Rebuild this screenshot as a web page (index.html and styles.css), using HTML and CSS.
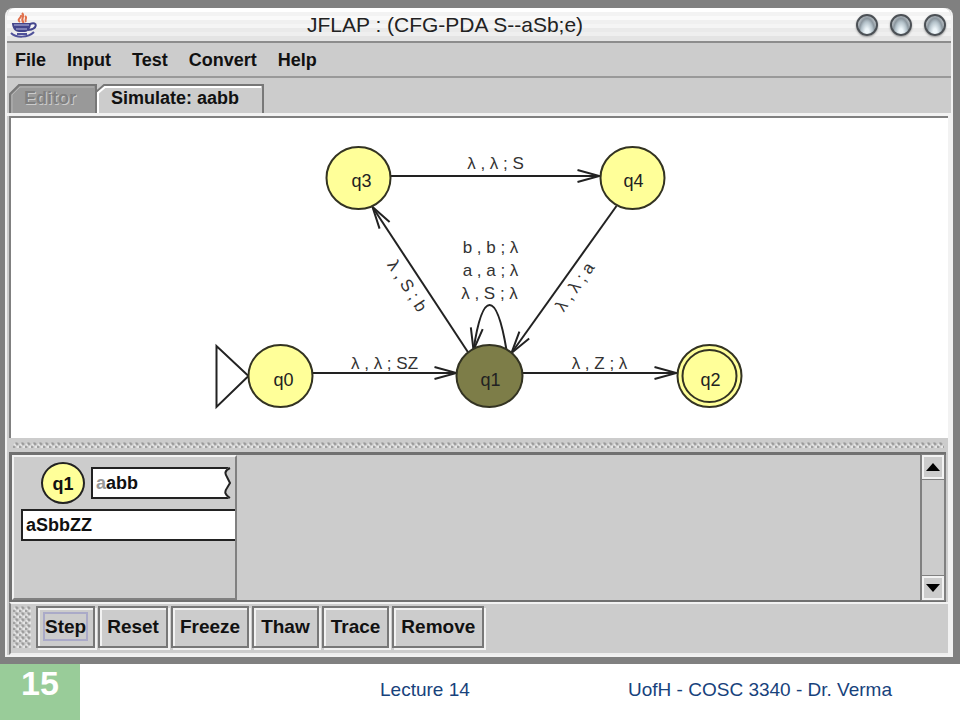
FILE: index.html
```html
<!DOCTYPE html>
<html lang="en">
<head>
<meta charset="utf-8">
<title>JFLAP : (CFG-PDA S--aSb;e)</title>
<link rel="stylesheet" href="styles.css">
</head>
<body>
<main class="desktop">
  <section class="window">
    <header class="titlebar">
      <svg class="java" viewBox="0 0 28 26" aria-hidden="true">
        <path d="M14 11 C9 7 16 5 12 1 M10 10 C6 7 12 6 11 3 M16 10 C14 7 18 6 15 4" fill="none" stroke="#e0704c" stroke-width="2"/>
        <path d="M2 11 H21 C21 16 18 20 15 20 H9 C5 20 2 16 2 11Z" fill="#43458c"/>
        <path d="M4 13 H19 M6 17 H17" stroke="#b9bce0" stroke-width="1"/>
        <path d="M20 12 C28 9 28 17 18 18" fill="none" stroke="#43458c" stroke-width="2"/>
        <path d="M1 21 C6 26 18 26 24 20 M7 22 H17" fill="none" stroke="#50529a" stroke-width="2"/>
      </svg>
      <h1 class="title">JFLAP : (CFG-PDA S--aSb;e)</h1>
      <div class="controls">
        <button class="orb" aria-label="Minimize"></button>
        <button class="orb" aria-label="Maximize"></button>
        <button class="orb" aria-label="Close"></button>
      </div>
    </header>
    <nav class="menubar">
      <button class="menu">File</button>
      <button class="menu">Input</button>
      <button class="menu">Test</button>
      <button class="menu">Convert</button>
      <button class="menu">Help</button>
    </nav>
    <div class="tabs" role="tablist">
      <button class="tab tab-editor" role="tab" disabled>
        <svg class="tab-shape" viewBox="0 0 88 29" preserveAspectRatio="none" aria-hidden="true"><path d="M1 29 V10 L10 1 H87 V29" fill="#999" stroke="#777" stroke-width="2"/><path d="M3 29 V11 L11 3 H85" fill="none" stroke="#b5b5b5"/></svg>
        <span class="tab-label">Editor</span>
      </button>
      <button class="tab tab-simulate" role="tab" aria-selected="true">
        <svg class="tab-shape" viewBox="0 0 168 29" preserveAspectRatio="none" aria-hidden="true"><path d="M0 29 V8 L8 1 H167 V29" fill="#ccc" stroke="#777" stroke-width="2"/><path d="M2 29 V9 L9 3 H165" fill="none" stroke="#fff" stroke-width="2"/></svg>
        <span class="tab-label">Simulate: aabb</span>
      </button>
    </div>
    <div class="pane">
      <svg class="automaton" viewBox="0 1 936 320" role="img" aria-label="Pushdown automaton">
        <defs>
          <marker id="arrow" markerUnits="userSpaceOnUse" markerWidth="26" markerHeight="16" refX="23" refY="8" orient="auto"><path d="M1 2 L23 8 L1 14" class="line"/></marker>
        </defs>
        <g class="line">
          <path d="M205 229 V290 L237 259 Z"/>
          <path d="M301 256 H445" marker-end="url(#arrow)"/>
          <path d="M510 256 H665" marker-end="url(#arrow)"/>
          <path d="M379 59 H588" marker-end="url(#arrow)"/>
          <path d="M457 236 L361 90" marker-end="url(#arrow)"/>
          <path d="M605 89 L500 236" marker-end="url(#arrow)"/>
          <path d="M495 233 C485 173 471 173 462 233" marker-end="url(#arrow)"/>
        </g>
        <g class="states">
          <ellipse cx="269" cy="259" rx="32" ry="31"/>
          <ellipse cx="347" cy="61" rx="32" ry="31"/>
          <ellipse cx="621" cy="61" rx="32" ry="31"/>
          <ellipse class="current" cx="478" cy="259" rx="33" ry="31"/>
          <ellipse cx="698" cy="259" rx="32" ry="31"/>
          <ellipse cx="698" cy="259" rx="27" ry="26"/>
        </g>
        <g class="state-name">
          <text x="272" y="269">q0</text>
          <text x="350" y="70">q3</text>
          <text x="622" y="70">q4</text>
          <text x="479" y="269">q1</text>
          <text x="699" y="269">q2</text>
        </g>
        <g class="transition">
          <text x="484" y="52">λ , λ ; S</text>
          <text x="373" y="252">λ , λ ; SZ</text>
          <text x="588" y="252">λ , Z ; λ</text>
          <text x="479" y="136">b , b ; λ</text>
          <text x="479" y="159">a , a ; λ</text>
          <text x="478" y="182">λ , S ; λ</text>
          <text transform="translate(391 172) rotate(57)">λ , S ; b</text>
          <text transform="translate(568 173) rotate(-55)">λ , λ ; a</text>
        </g>
      </svg>
      <div class="divider grip"></div>
      <div class="simulation">
        <article class="configuration">
          <div class="config-row">
            <span class="badge">q1</span>
            <div class="tape"><span class="read">a</span>abb
              <svg class="tear" viewBox="0 0 8 32" aria-hidden="true"><path d="M8 0 H6 C0 4 1 6 4 10 C8 13 7 17 4 20 C0 25 2 27 6 32 H8Z" fill="#ccc"/><path d="M7 1 C1 4 2 7 4 10 L7 16 L4 21 C1 25 2 28 7 31" fill="none" stroke="#222" stroke-width="2"/></svg>
            </div>
          </div>
          <div class="stack">aSbbZZ</div>
        </article>
        <div class="scrollbar">
          <button class="scroll-button" aria-label="Scroll up"><svg viewBox="0 0 14 8" aria-hidden="true"><path d="M0 8 L7 0 L14 8Z"/></svg></button>
          <button class="scroll-button" aria-label="Scroll down"><svg viewBox="0 0 14 8" aria-hidden="true"><path d="M0 0 L7 8 L14 0Z"/></svg></button>
        </div>
      </div>
      <div class="toolbar">
        <div class="handle grip"></div>
        <button class="tool"><span class="focus">Step</span></button>
        <button class="tool">Reset</button>
        <button class="tool">Freeze</button>
        <button class="tool">Thaw</button>
        <button class="tool">Trace</button>
        <button class="tool">Remove</button>
      </div>
    </div>
  </section>
</main>
<footer class="footer">
  <strong class="page-number">15</strong>
  <span class="lecture">Lecture 14</span>
  <span class="author">UofH - COSC 3340 - Dr. Verma</span>
</footer>
</body>
</html>
```
FILE: styles.css
```css
* { box-sizing: border-box; }

body {
  margin: 0;
  min-height: 100vh;
  display: flex;
  flex-direction: column;
  background: #fff;
  font-family: "Liberation Sans", Arial, sans-serif;
}

button {
  font: inherit;
  color: inherit;
  border: 0;
  padding: 0;
  background: none;
}

.desktop {
  flex: 1;
  display: flex;
  padding: 8px 7px 7px 5px;
  background: #808080;
}

.window {
  flex: 1;
  display: flex;
  flex-direction: column;
  background: #ccc;
  border: solid #f2f2f2;
  border-width: 0 2px 2px;
  border-radius: 8px 8px 0 0;
  font-size: 18px;
  font-weight: bold;
  color: #111;
}

.titlebar {
  display: grid;
  grid-template-columns: 28px 1fr 96px;
  align-items: center;
  height: 35px;
  padding: 0 3px;
  border-bottom: 2px solid #8c8c8c;
  border-radius: 8px 8px 0 0;
  background: linear-gradient(#fff 0 4px, #f3f3f3 4px 8px, #fafafa 8px 12px, #f0f0f0 12px 16px, #f5f5f5 16px 20px, #eaeaea 20px 24px, #efefef 24px 28px, #e4e4e4 28px);
}

.java { width: 28px; height: 26px; }

.title {
  margin: 0;
  text-align: center;
  font-size: 21px;
  line-height: 24px;
  font-weight: normal;
  color: #222;
}

.controls { display: flex; justify-content: flex-end; gap: 12px; padding-right: 2px; }

.orb {
  flex: none;
  width: 22px;
  height: 22px;
  border: 2px solid #4b5055;
  border-radius: 50%;
  background: radial-gradient(ellipse at 50% 90%, #eef6fa 0 15%, #b4c2ca 45%, #8b969e 60%, #d5dadd 90%);
  box-shadow: 0 1px 2px #999;
}

.menubar {
  display: flex;
  gap: 21px;
  height: 35px;
  padding: 1px 8px 0;
  border-bottom: 2px solid #999;
}

.tabs { display: flex; height: 35px; padding: 6px 2px 0; }

.tab { position: relative; height: 29px; padding: 0 21px 0 15px; }
.tab-simulate { margin-left: -1px; padding-right: 25px; }
.tab-shape { position: absolute; inset: 0; width: 100%; height: 100%; }
.tab-label { position: relative; }
.tab-editor .tab-label { color: #808080; text-shadow: 1px 1px #ccc; }

.pane {
  flex: 1;
  display: flex;
  flex-direction: column;
  padding-left: 2px;
  border-top: 3px solid #f2f2f2;
  border-right: 3px solid #f2f2f2;
}

.automaton {
  display: block;
  width: 100%;
  height: 322px;
  background: #fff;
  border: solid #808080;
  border-width: 2px 0 0 2px;
}

.line { fill: none; stroke: #222; stroke-width: 2; }
.states { fill: #ff9; stroke: #332; stroke-width: 2; }
.states .current { fill: #7d7d48; }
.state-name { font: 18px "Liberation Sans", sans-serif; fill: #222; text-anchor: middle; }
.transition { font: 17px "Liberation Sans", sans-serif; fill: #333; text-anchor: middle; }

.grip {
  background-color: #ccc;
  background-image:
    radial-gradient(circle at 4px 2px, #888 0, transparent 2px),
    radial-gradient(circle at 1px 5px, #888 0, transparent 2px),
    radial-gradient(circle at 3px 1px, #888 0, transparent 1px),
    radial-gradient(circle at 2px 3px, #f4f4f4 0, transparent 2px),
    radial-gradient(circle at 5px 5px, #f4f4f4 0, transparent 2px);
  background-size: 6px 6px;
  background-origin: content-box;
  background-clip: content-box;
}

.divider { height: 14px; padding: 4px; }

.simulation {
  display: flex;
  height: 150px;
  border: solid #707070;
  border-width: 3px 0 2px 3px;
  margin-right: 2px;
}

.configuration {
  width: 225px;
  padding: 5px 0 0 7px;
  border: 2px solid #f2f2f2;
  border-right-color: #808080;
  border-bottom-color: #808080;
}

.config-row { display: flex; align-items: center; gap: 6px; padding: 0 4px 5px 20px; }

.badge {
  width: 44px;
  height: 42px;
  border: 2px solid #222;
  border-radius: 50%;
  background: #ff9;
  line-height: 40px;
  text-align: center;
}

.tape, .stack {
  height: 32px;
  padding-left: 3px;
  border: 2px solid #222;
  background: #fff;
  line-height: 28px;
}

.tape { flex: 1; position: relative; border-right: 0; }
.read { color: #999; }
.tear { position: absolute; right: 0; top: -2px; width: 8px; height: 32px; }
.stack { border-right: 0; }

.scrollbar {
  display: flex;
  flex-direction: column;
  justify-content: space-between;
  width: 26px;
  margin-left: auto;
  border: solid #808080;
  border-width: 0 2px;
}

.scroll-button {
  display: grid;
  place-items: center;
  height: 24px;
  border: 2px solid #f2f2f2;
  outline: 1px solid #808080;
}

.scroll-button svg { width: 14px; height: 8px; }

.toolbar {
  flex: 1;
  display: flex;
  gap: 3px;
  padding: 2px 0 5px 2px;
  border-top: 2px solid #f2f2f2;
  border-left: 2px solid #808080;
  border-bottom: 2px solid #eee;
}

.handle { width: 18px; margin-right: 2px; }

.tool {
  height: 42px;
  padding: 0 7px;
  border: 2px solid #777;
  box-shadow: inset 2px 2px #f2f2f2, 2px 2px #f2f2f2;
  font-size: 19px;
}

.focus { padding: 2px 0; outline: 2px solid #aaaac8; }

.footer {
  flex: none;
  display: grid;
  grid-template-columns: 80px 1fr auto;
  height: 56px;
  padding-right: 68px;
  color: #17427c;
  font-size: 19px;
}

.page-number {
  background: #9c9;
  color: #fff;
  font-size: 34px;
  line-height: 38px;
  text-align: center;
}

.lecture { padding: 15px 0 0 300px; }
.author { padding-top: 15px; }
```
